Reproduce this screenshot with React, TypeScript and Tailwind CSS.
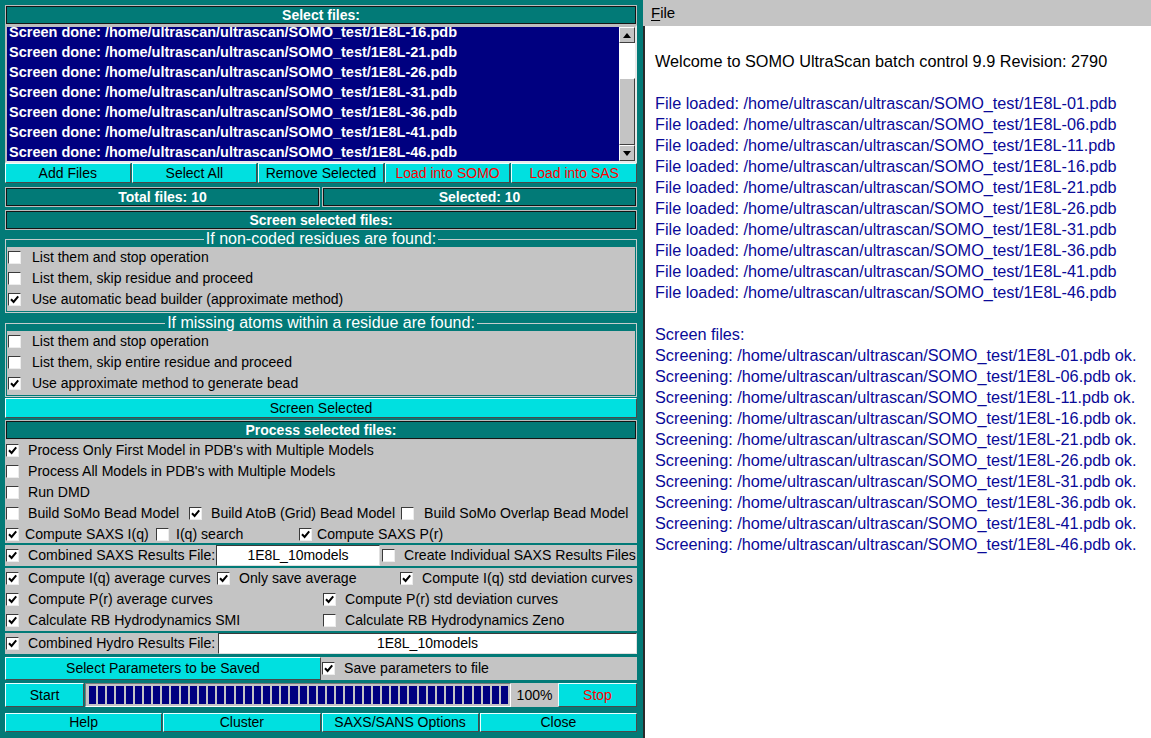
import React from 'react';

const files = ['01', '06', '11', '16', '21', '26', '31', '36', '41', '46'];
const base = '/home/ultrascan/ultrascan/SOMO_test/1E8L-';

function Box({ on }: { on?: boolean }) {
  return (
    <span className="inline-flex w-[13px] h-[13px] shrink-0 items-center justify-center bg-white border border-t-[#3a3a3a] border-l-[#3a3a3a] border-r-[#ececec] border-b-[#ececec]">
      {on && (
        <svg width="9" height="9" viewBox="0 0 9 9">
          <path d="M1 4.2 L3.6 7 L8.2 1.4" fill="none" stroke="#000" strokeWidth="2" />
        </svg>
      )}
    </span>
  );
}

function Opt({ on, label, gap = 'ml-[9px]', className = '' }: { on?: boolean; label: string; gap?: string; className?: string }) {
  return (
    <div className={`flex items-center whitespace-nowrap ${className}`}>
      <Box on={on} />
      <span className={gap}>{label}</span>
    </div>
  );
}

function Btn({ children, red, className = '' }: { children: React.ReactNode; red?: boolean; className?: string }) {
  return (
    <div
      className={`flex items-center justify-center whitespace-nowrap bg-[#00e0e0] border border-t-[#eaffff] border-l-[#eaffff] border-r-[#4a4a4a] border-b-[#4a4a4a] text-[14px] ${red ? 'text-[#ff0000]' : 'text-black'} ${className}`}
    >
      {children}
    </div>
  );
}

function Bar({ children, className = '' }: { children: React.ReactNode; className?: string }) {
  return (
    <div
      className={`h-[20px] flex items-center justify-center bg-[#027a77] border border-[#bdbdbd] shadow-[inset_1px_1px_0_#141414,inset_-1px_-1px_0_#141414] text-white font-bold text-[14px] ${className}`}
    >
      {children}
    </div>
  );
}

function Group({ title, rows }: { title: string; rows: { on?: boolean; label: string }[] }) {
  return (
    <fieldset className="border border-[#c4cccc] px-[1px] pb-[1px]">
      <legend className="mx-auto px-[2px] text-white text-[16px] leading-[16px]">{title}</legend>
      <div className="h-[64px] bg-[#c4c4c4] pl-[1px] text-[14px]">
        {rows.map((r) => (
          <Opt key={r.label} on={r.on} label={r.label} gap="ml-[11px]" className="h-[21px]" />
        ))}
      </div>
    </fieldset>
  );
}

function Input({ value, className = '' }: { value: string; className?: string }) {
  return (
    <div className={`bg-white flex items-center justify-center text-[14px] border border-t-[#3a3a3a] border-l-[#3a3a3a] border-r-[#e0e0e0] border-b-[#e0e0e0] ${className}`}>
      {value}
    </div>
  );
}

export default function App() {
  return (
    <div className="w-[1151px] h-[738px] flex overflow-hidden font-['Liberation_Sans',Arial,sans-serif]">
      {/* left: batch controls */}
      <div className="w-[643px] shrink-0 bg-[#027a77] pl-[5px] pr-[6px] pt-[5px] flex flex-col">
        <Bar>Select files:</Bar>

        <div className="h-[138px] flex bg-[#000080] border-2 border-t-[#bcbcbc] border-l-[#bcbcbc] border-r-[#e8e8e8] border-b-[#e8e8e8]">
          <div className="flex-1 overflow-hidden pl-[2px]">
            {/* list is scrolled: the top row is half hidden */}
            <div className="-mt-[5px] text-white font-bold text-[14.5px] leading-[20px]">
              {files.slice(3).map((f) => (
                <div key={f} className="whitespace-nowrap">Screen done: {base}{f}.pdb</div>
              ))}
            </div>
          </div>
          {/* scrollbar */}
          <div className="w-[16px] flex flex-col bg-white">
            <div className="h-[16px] bg-[#c4c4c4] border border-t-white border-l-white border-r-[#404040] border-b-[#404040] flex items-center justify-center">
              <svg width="8" height="5" viewBox="0 0 8 5"><path d="M0 5 L4 0 L8 5 Z" fill="#000" /></svg>
            </div>
            <div className="h-[35px]" />
            <div className="flex-1 bg-[#c4c4c4] border border-t-white border-l-white border-r-[#404040] border-b-[#404040]" />
            <div className="h-[16px] bg-[#c4c4c4] border border-t-white border-l-white border-r-[#404040] border-b-[#404040] flex items-center justify-center">
              <svg width="8" height="5" viewBox="0 0 8 5"><path d="M0 0 L8 0 L4 5 Z" fill="#000" /></svg>
            </div>
          </div>
        </div>

        <div className="h-[20px] flex gap-[1px]">
          <Btn className="flex-1">Add Files</Btn>
          <Btn className="flex-1">Select All</Btn>
          <Btn className="flex-1">Remove Selected</Btn>
          <Btn red className="flex-1">Load into SOMO</Btn>
          <Btn red className="flex-1">Load into SAS</Btn>
        </div>

        <div className="mt-[4px] flex gap-[2px]">
          <Bar className="flex-1">Total files: 10</Bar>
          <Bar className="flex-1">Selected: 10</Bar>
        </div>

        <Bar className="mt-[3px]">Screen selected files:</Bar>

        <div className="mt-[1px]">
          <Group
            title="If non-coded residues are found:"
            rows={[
              { label: 'List them and stop operation' },
              { label: 'List them, skip residue and proceed' },
              { on: true, label: 'Use automatic bead builder (approximate method)' },
            ]}
          />
        </div>
        <div className="mt-[2px]">
          <Group
            title="If missing atoms within a residue are found:"
            rows={[
              { label: 'List them and stop operation' },
              { label: 'List them, skip entire residue and proceed' },
              { on: true, label: 'Use approximate method to generate bead' },
            ]}
          />
        </div>

        <Btn className="mt-[1px] h-[20px]">Screen Selected</Btn>
        <Bar className="mt-[2px]">Process selected files:</Bar>

        {/* process options */}
        <div className="h-[103px] overflow-hidden bg-[#c4c4c4] text-[14.1px] pl-[1px]">
          <Opt on label="Process Only First Model in PDB's with Multiple Models" className="h-[21px]" />
          <Opt label="Process All Models in PDB's with Multiple Models" className="h-[21px]" />
          <Opt label="Run DMD" className="h-[21px]" />
          <div className="h-[21px] flex">
            <Opt label="Build SoMo Bead Model" className="w-[183px]" />
            <Opt on label="Build AtoB (Grid) Bead Model" className="w-[212px]" />
            <Opt label="Build SoMo Overlap Bead Model" gap="ml-[10px]" />
          </div>
          <div className="h-[21px] flex">
            <Opt on label="Compute SAXS I(q)" gap="ml-[6px]" className="w-[150px]" />
            <Opt label="I(q) search" gap="ml-[7px]" className="w-[143px]" />
            <Opt on label="Compute SAXS P(r)" gap="ml-[5px]" />
          </div>
        </div>

        <div className="mt-[2px] h-[21px] flex bg-[#c4c4c4] text-[14.1px]">
          <Opt on label="Combined SAXS Results File:" className="w-[211px] pl-[1px]" />
          <Input value="1E8L_10models" className="w-[164px]" />
          <Opt label="Create Individual SAXS Results Files" className="pl-[2px]" />
        </div>

        <div className="mt-[2px] h-[63px] bg-[#c4c4c4] text-[14.1px]">
          <div className="h-[21px] flex">
            <Opt on label="Compute I(q) average curves" className="w-[211px] pl-[1px]" />
            <Opt on label="Only save average" className="w-[183px] pl-[1px]" />
            <Opt on label="Compute I(q) std deviation curves" className="pl-[1px]" />
          </div>
          <div className="h-[21px] flex">
            <Opt on label="Compute P(r) average curves" className="w-[317px] pl-[1px]" />
            <Opt on label="Compute P(r) std deviation curves" className="pl-[1px]" />
          </div>
          <div className="h-[21px] flex">
            <Opt on label="Calculate RB Hydrodynamics SMI" className="w-[317px] pl-[1px]" />
            <Opt label="Calculate RB Hydrodynamics Zeno" className="pl-[1px]" />
          </div>
        </div>

        <div className="mt-[2px] h-[21px] flex bg-[#c4c4c4] text-[14.1px]">
          <Opt on label="Combined Hydro Results File:" className="w-[213px] pl-[1px]" />
          <Input value="1E8L_10models" className="flex-1" />
        </div>

        <div className="mt-[3px] h-[23px] flex text-[14.1px]">
          <Btn className="w-[316px]">Select Parameters to be Saved</Btn>
          <div className="flex-1 bg-[#c4c4c4] pl-[1px] flex">
            <Opt on label="Save parameters to file" />
          </div>
        </div>

        <div className="mt-[3px] h-[24px] flex text-[14px]">
          <Btn className="w-[79px]">Start</Btn>
          <div className="ml-[1px] w-[426px] bg-[#c4c4c4] border border-t-[#7a7a7a] border-l-[#7a7a7a] border-r-white border-b-white pl-[3px] pr-[2px] py-[2px] flex gap-[2px]">
            {Array.from({ length: 46 }).map((_, i) => (
              <div key={i} className="flex-1 bg-[#000080]" />
            ))}
          </div>
          <div className="w-[47px] bg-[#c4c4c4] flex items-center justify-center">100%</div>
          <Btn red className="flex-1">Stop</Btn>
        </div>

        <div className="mt-[6px] h-[19px] flex gap-[1px]">
          <Btn className="flex-1">Help</Btn>
          <Btn className="flex-1">Cluster</Btn>
          <Btn className="flex-1">SAXS/SANS Options</Btn>
          <Btn className="flex-1">Close</Btn>
        </div>
      </div>

      {/* right: message log */}
      <div className="flex-1 flex flex-col min-w-0">
        <div className="h-[26px] bg-[#c4c4c4] flex items-center pl-[8px] text-[15px]">
          <span><span className="underline underline-offset-2">F</span>ile</span>
        </div>
        <div className="flex-1 bg-white border-l-2 border-[#2a2a2a] pl-[10px] pt-[25px] text-[16.25px] leading-[21px] whitespace-nowrap overflow-hidden">
          <div className="text-black">Welcome to SOMO UltraScan batch control 9.9 Revision: 2790</div>
          <div className="h-[21px]" />
          {files.map((f) => (
            <div key={f} className="text-[#0a0a98]">File loaded: {base}{f}.pdb</div>
          ))}
          <div className="h-[21px]" />
          <div className="text-[#0a0a98]">Screen files:</div>
          {files.map((f) => (
            <div key={f} className="text-[#0a0a98]">Screening: {base}{f}.pdb ok.</div>
          ))}
        </div>
      </div>
    </div>
  );
}
